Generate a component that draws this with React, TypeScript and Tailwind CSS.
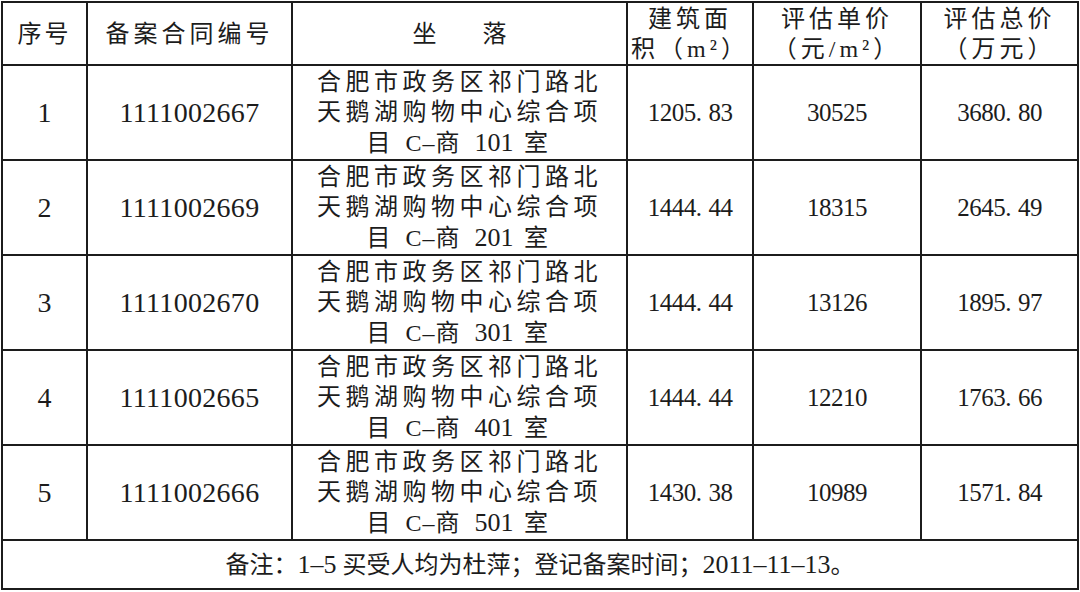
const rows = [
  { no: '1', code: '1111002667', room: '101', area: '1205.83', unit: '30525', total: '3680.80' },
  { no: '2', code: '1111002669', room: '201', area: '1444.44', unit: '18315', total: '2645.49' },
  { no: '3', code: '1111002670', room: '301', area: '1444.44', unit: '13126', total: '1895.97' },
  { no: '4', code: '1111002665', room: '401', area: '1444.44', unit: '12210', total: '1763.66' },
  { no: '5', code: '1111002666', room: '501', area: '1430.38', unit: '10989', total: '1571.84' },
]

// decimals in the source have a wide full-width-ish dot
function Num({ value }: { value: string }) {
  const [a, b] = value.split('.')
  if (b === undefined) return <>{a}</>
  return (
    <>
      {a}
      <span className="mr-[7px]">.</span>
      {b}
    </>
  )
}

const cell = 'border-2 border-[#1c1c1c] text-center align-middle p-0'
const font = "font-['Liberation_Serif','Noto_Sans_CJK_SC',serif]"

export default function App() {
  return (
    <div className={`bg-white w-[1080px] h-[592px] pl-px pt-px text-[#1c1c1c] ${font}`}>
      <table className="w-[1076px] table-fixed border-collapse">
        <colgroup>
          <col className="w-[85px]" />
          <col className="w-[205px]" />
          <col className="w-[335px]" />
          <col className="w-[126px]" />
          <col className="w-[168px]" />
          <col className="w-[157px]" />
        </colgroup>
        <thead>
          <tr className="h-[63px] text-[24px] leading-[30px]">
            <th className={`${cell} font-normal tracking-[3px]`}>序号</th>
            <th className={`${cell} font-normal tracking-[4px]`}>备案合同编号</th>
            <th className={`${cell} font-normal`}>
              <span>坐</span>
              <span className="ml-[46px]">落</span>
            </th>
            <th className={`${cell} font-normal tracking-[4px]`}>
              <div>建筑面</div>
              <div>积（m²）</div>
            </th>
            <th className={`${cell} font-normal tracking-[4px]`}>
              <div>评估单价</div>
              <div>（元/m²）</div>
            </th>
            <th className={`${cell} font-normal tracking-[4px]`}>
              <div>评估总价</div>
              <div>（万元）</div>
            </th>
          </tr>
        </thead>
        <tbody>
          {rows.map((r) => (
            <tr key={r.no} className="h-[95px]">
              <td className={`${cell} text-[28px]`}>{r.no}</td>
              <td className={`${cell} text-[28px] tracking-[0.3px]`}>{r.code}</td>
              <td className={`${cell} text-[24px] leading-[30.5px] tracking-[4.5px]`}>
                <div>合肥市政务区祁门路北</div>
                <div>天鹅湖购物中心综合项</div>
                <div>
                  目 <span className="tracking-[1px]">C–</span>商{' '}
                  <span className="text-[26px] tracking-normal">{r.room}</span> 室
                </div>
              </td>
              <td className={`${cell} text-[25px] tracking-[-0.5px]`}>
                <Num value={r.area} />
              </td>
              <td className={`${cell} text-[25px] tracking-[-0.5px]`}>
                <Num value={r.unit} />
              </td>
              <td className={`${cell} text-[25px] tracking-[-0.5px]`}>
                <Num value={r.total} />
              </td>
            </tr>
          ))}
          <tr className="h-[49px]">
            <td colSpan={6} className={`${cell} text-[24px] leading-[30px]`}>
              备注：<span className="text-[26px]">1–5</span> 买受人均为杜萍；登记备案时间；
              <span className="text-[26px]">2011–11–13</span>。
            </td>
          </tr>
        </tbody>
      </table>
    </div>
  )
}
